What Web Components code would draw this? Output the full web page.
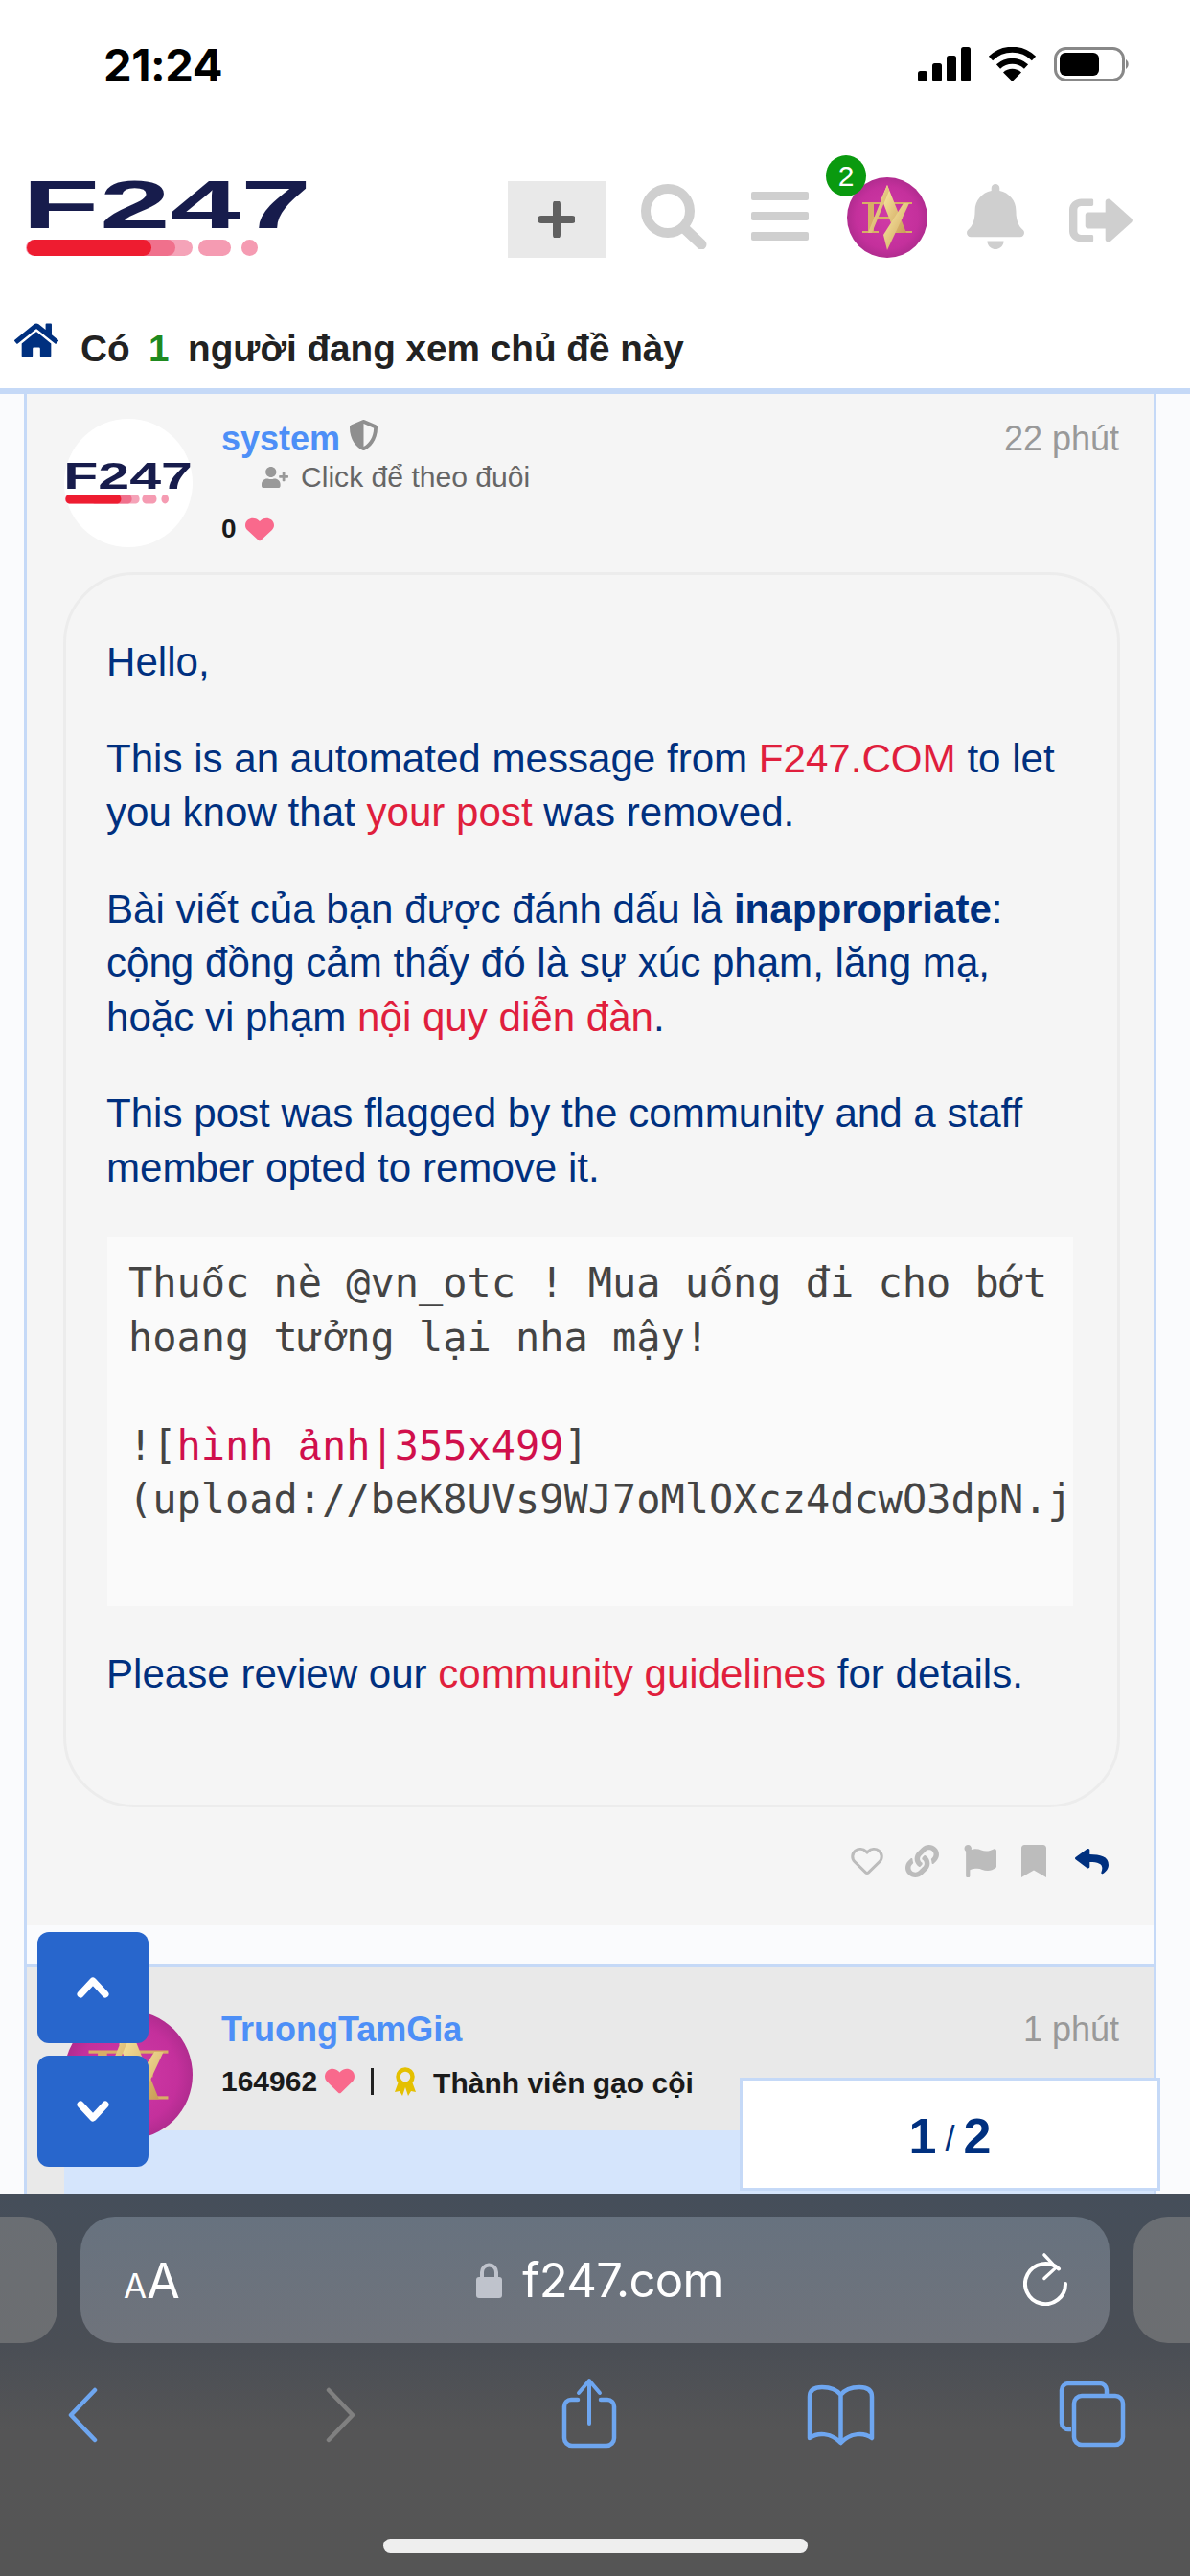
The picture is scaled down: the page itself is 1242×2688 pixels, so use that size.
<!DOCTYPE html>
<html lang="vi"><head><meta charset="utf-8"><title>F247</title>
<style>
html,body{margin:0;padding:0;background:#fafbfd}
body{font-family:"Liberation Sans",Arial,sans-serif;width:1242px;height:2688px;overflow:hidden}
</style></head><body>
<app-page>
  <status-bar slot="top"></status-bar>
  <site-header slot="top"></site-header>
  <topic-bar slot="top"></topic-bar>
  <post-card>
    <post-head name="system" time="22 phút" shield>
      <brand-logo slot="avatar" class="mini"></brand-logo>
      <div slot="sub" style="display:flex;align-items:center;height:39px;margin:0 0 0 42px;color:#666;font-size:30.1px;gap:13px"><fa-icon name="userplus" w="28" h="22" color="#999"></fa-icon>Click để theo đuôi</div>
      <div slot="stats" style="display:flex;align-items:center;height:38px;margin-top:16px;font-weight:700;font-size:28px;color:#1a1a1a;gap:9px">0 <fa-icon name="heart" w="30" h="27" color="#f9698c"></fa-icon></div>
    </post-head>
    <post-box>
      <p>Hello,</p>
      <p>This is an automated message from <red-link>F247.COM</red-link> to let<br>you know that <red-link>your post</red-link> was removed.</p>
      <p>Bài viết của bạn được đánh dấu là <b>inappropriate</b>:<br>cộng đồng cảm thấy đó là sự xúc phạm, lăng mạ,<br>hoặc vi phạm <red-link>nội quy diễn đàn</red-link>.</p>
      <p>This post was flagged by the community and a staff<br>member opted to remove it.</p>
      <code-block>
        <div>Thu<span style="font-family:'Liberation Mono'">ố</span>c nè @vn_otc ! Mua u<span style="font-family:'Liberation Mono'">ố</span>ng đi cho bớt</div>
        <div>hoang tư<span style="font-family:'Liberation Mono'">ở</span>ng lại nha mậy!</div>
        <div></div>
        <div>![<span style="color:#d0104c">hình <span style="font-family:'Liberation Mono'">ả</span>nh|355x499</span>]</div>
        <div>(upload://beK8UVs9WJ7oMlOXcz4dcwO3dpN.j</div>
      </code-block>
      <p>Please review our <red-link>community guidelines</red-link> for details.</p>
    </post-box>
    <post-actions></post-actions>
  </post-card>
  <post-card second>
    <post-head second name="TruongTamGia" time="1 phút">
      <gold-avatar slot="avatar" size="134"></gold-avatar>
      <div slot="stats" style="display:flex;align-items:center;height:40px;margin-top:14px;font-weight:700;font-size:30px;color:#1a1a1a">164962<fa-icon name="heart" w="31" h="29" color="#f9698c" style="margin-left:8px"></fa-icon><span style="width:3px;height:28px;background:#222;margin:0 21px 0 17px"></span><rank-ribbon></rank-ribbon><span style="margin-left:17px;margin-top:5px">Thành viên gạo cội</span></div>
    </post-head>
    <selected-post></selected-post>
  </post-card>
  <scroll-buttons slot="float"></scroll-buttons>
  <page-counter slot="float"></page-counter>
  <safari-bar slot="bottom"></safari-bar>
</app-page>
<script>
const ICONS={
 bell:[448,"M224 512c35.32 0 63.97-28.65 63.97-64H160.03c0 35.35 28.65 64 63.97 64zm215.39-149.71c-19.32-20.76-55.47-51.99-55.47-154.29 0-77.7-54.48-139.9-127.94-155.16V32c0-17.67-14.32-32-31.98-32s-31.98 14.33-31.98 32v20.84C118.56 68.1 64.08 130.3 64.08 208c0 102.3-36.15 133.53-55.47 154.29-6 6.45-8.66 14.16-8.61 21.71.11 16.4 12.98 32 32.1 32h383.8c19.12 0 32-15.6 32.1-32 .05-7.55-2.61-15.27-8.61-21.71z"],
 signout:[512,"M497 273L329 441c-15 15-41 4.5-41-17v-96H152c-13.3 0-24-10.7-24-24v-96c0-13.3 10.7-24 24-24h136V88c0-21.4 25.9-32 41-17l168 168c9.3 9.4 9.3 24.6 0 34zM192 436v-40c0-6.6-5.4-12-12-12H96c-17.7 0-32-14.3-32-32V160c0-17.7 14.3-32 32-32h84c6.6 0 12-5.4 12-12V76c0-6.6-5.4-12-12-12H96c-53 0-96 43-96 96v192c0 53 43 96 96 96h84c6.6 0 12-5.4 12-12z"],
 home:[576,"M280.37 148.26L96 300.11V464a16 16 0 0 0 16 16l112.06-.29a16 16 0 0 0 15.92-16V368a16 16 0 0 1 16-16h64a16 16 0 0 1 16 16v95.64a16 16 0 0 0 16 16.05L464 480a16 16 0 0 0 16-16V300L295.67 148.26a12.19 12.19 0 0 0-15.3 0zM571.6 251.47L488 182.56V44.05a12 12 0 0 0-12-12h-56a12 12 0 0 0-12 12v72.61L318.47 43a48 48 0 0 0-61 0L4.34 251.47a12 12 0 0 0-1.6 16.9l25.5 31A12 12 0 0 0 45.15 301l235.22-193.74a12.19 12.19 0 0 1 15.3 0L530.9 301a12 12 0 0 0 16.9-1.6l25.5-31a12 12 0 0 0-1.7-16.93z"],
 shield:[512,"M466.5 83.7l-192-80a48.15 48.15 0 0 0-36.9 0l-192 80C27.7 91.1 16 108.6 16 128c0 198.5 114.5 335.7 221.5 380.3 11.8 4.9 25.1 4.9 36.9 0C360.1 472.6 496 349.3 496 128c0-19.4-11.7-36.9-29.5-44.3zM256.1 446.3l-.1-381 175.9 73.3c-3.3 151.4-82.1 261.1-175.8 307.7z"],
 userplus:[640,"M624 208h-64v-64c0-8.8-7.2-16-16-16h-32c-8.8 0-16 7.2-16 16v64h-64c-8.8 0-16 7.2-16 16v32c0 8.8 7.2 16 16 16h64v64c0 8.8 7.2 16 16 16h32c8.8 0 16-7.2 16-16v-64h64c8.8 0 16-7.2 16-16v-32c0-8.8-7.2-16-16-16zm-400 48c70.7 0 128-57.3 128-128S294.7 0 224 0 96 57.3 96 128s57.3 128 128 128zm89.6 32h-16.7c-22.2 10.2-46.9 16-72.9 16s-50.6-5.8-72.9-16h-16.7C60.2 288 0 348.2 0 422.4V464c0 26.5 21.5 48 48 48h352c26.5 0 48-21.5 48-48v-41.6c0-74.2-60.2-134.4-134.4-134.4z"],
 heart:[512,"M462.3 62.6C407.5 15.9 326 24.3 275.7 76.2L256 96.5l-19.7-20.3C186.1 24.3 104.5 15.9 49.7 62.6c-62.8 53.6-66.1 149.8-9.9 207.9l193.5 199.8c12.5 12.9 32.8 12.9 45.3 0l193.5-199.8c56.3-58.1 53-154.3-9.8-207.9z"],
 link:[512,"M326.612 185.391c59.747 59.809 58.927 155.698.36 214.59-.11.12-.24.25-.36.37l-67.2 67.2c-59.27 59.27-155.699 59.262-214.96 0-59.27-59.26-59.27-155.7 0-214.96l37.106-37.106c9.84-9.84 26.786-3.3 27.294 10.606.648 17.722 3.826 35.527 9.69 52.721 1.986 5.822.567 12.262-3.783 16.612l-13.087 13.087c-28.026 28.026-28.905 73.66-1.155 101.96 28.024 28.579 74.086 28.749 102.325.51l67.2-67.19c28.191-28.191 28.073-73.757 0-101.83-3.701-3.694-7.429-6.564-10.341-8.569a16.037 16.037 0 0 1-6.947-12.606c-.396-10.567 3.348-21.456 11.698-29.806l21.054-21.055c5.521-5.521 14.182-6.199 20.584-1.731a152.482 152.482 0 0 1 20.522 17.197zM467.547 44.449c-59.261-59.262-155.69-59.27-214.96 0l-67.2 67.2c-.12.12-.25.25-.36.37-58.566 58.892-59.387 154.781.36 214.59a152.454 152.454 0 0 0 20.521 17.196c6.402 4.468 15.064 3.789 20.584-1.731l21.054-21.055c8.35-8.35 12.094-19.239 11.698-29.806a16.037 16.037 0 0 0-6.947-12.606c-2.912-2.005-6.64-4.875-10.341-8.569-28.073-28.073-28.191-73.639 0-101.83l67.2-67.19c28.239-28.239 74.3-28.069 102.325.51 27.75 28.3 26.872 73.934-1.155 101.96l-13.087 13.087c-4.35 4.35-5.769 10.79-3.783 16.612 5.864 17.194 9.042 34.999 9.69 52.721.509 13.906 17.454 20.446 27.294 10.606l37.106-37.106c59.271-59.259 59.271-155.699.001-214.959z"],
 flag:[512,"M349.565 98.783C295.978 98.783 251.721 64 184.348 64c-24.955 0-47.309 4.384-68.045 12.013a55.947 55.947 0 0 0 3.586-23.562C118.117 24.015 94.806 1.206 66.338.048 34.345-1.254 8 24.296 8 56c0 19.026 9.497 35.825 24 45.945V488c0 13.255 10.745 24 24 24h16c13.255 0 24-10.745 24-24v-94.4c28.311-12.064 63.582-22.122 114.435-22.122 53.588 0 97.844 34.783 165.217 34.783 48.169 0 86.667-16.294 122.505-40.858C506.84 359.452 512 349.571 512 339.045v-243.1c0-23.393-24.269-38.87-45.485-29.016-34.338 15.948-76.454 31.854-116.95 31.854z"],
 bookmark:[384,"M0 512V48C0 21.49 21.49 0 48 0h288c26.51 0 48 21.49 48 48v464L192 400 0 512z"],
 reply:[512,"M8.309 189.836L184.313 37.851C199.719 24.546 224 35.347 224 56.015v80.053c160.629 1.839 288 34.032 288 186.258 0 61.441-39.581 122.309-83.333 154.132-13.653 9.931-33.111-2.533-28.077-18.631 45.344-145.012-21.507-183.51-176.59-185.742V360c0 20.7-24.3 31.453-39.687 18.164l-176.004-152c-11.071-9.562-11.086-26.753 0-36.328z"]
};
function def(name,html,extra){
  const t=document.createElement('template');t.innerHTML=html;
  customElements.define(name,class extends HTMLElement{
    constructor(){super();this.attachShadow({mode:'open'}).appendChild(t.content.cloneNode(true));}
    connectedCallback(){extra&&extra.call(this,this.shadowRoot)}
  });
}
customElements.define('fa-icon',class extends HTMLElement{
  constructor(){super();this.attachShadow({mode:'open'})}
  connectedCallback(){
    const n=this.getAttribute('name'),[vw,d]=ICONS[n],w=this.getAttribute('w'),h=this.getAttribute('h'),c=this.getAttribute('color');
    const outline=this.hasAttribute('outline');
    this.shadowRoot.innerHTML=`<style>:host{display:inline-flex;flex:none;width:${w}px;height:${h}px}svg{width:100%;height:100%;display:block}</style>
    <svg viewBox="${outline?'-30 -10 572 532':'0 0 '+vw+' 512'}" preserveAspectRatio="none"><path d="${d}" fill="${outline?'none':c}" ${outline?`stroke="${c}" stroke-width="52"`:''}/></svg>`;
  }
});
def('app-page',`<style>
:host{display:flex;flex-direction:column;width:1242px;height:2688px;background:#fafbfd;position:relative;overflow:hidden}
.thread{flex:1;min-height:0;overflow:hidden;display:flex;flex-direction:column;padding-left:25px}
</style>
<slot name="top"></slot><div class="thread"><slot></slot></div><slot name="float"></slot><slot name="bottom"></slot>`);
def('status-bar',`<style>
:host{display:flex;justify-content:space-between;height:150px;box-sizing:border-box;padding:38px 0 0 108px;background:#fff;font-family:Inter,"Liberation Sans",sans-serif}
.t{font-size:47px;font-weight:700;line-height:60px;color:#000;letter-spacing:-.4px}
svg{display:block;margin:11px 0 0 0}
</style><div class="t">21:24</div>
<svg width="284" height="36" viewBox="0 0 284 36">
<g fill="#000"><rect x="0" y="25" width="10" height="11" rx="2.500"/><rect x="15" y="17" width="10" height="19" rx="2.500"/><rect x="30" y="9" width="10" height="27" rx="2.500"/><rect x="45" y="0" width="10" height="36" rx="2.500"/></g>
<g fill="none" stroke="#000" stroke-width="6"><path d="M76 12a32 32 0 0 1 45 0"/><path d="M84 20.500a21 21 0 0 1 29 0"/></g>
<path d="M98.500 36 L89 26.500a14 14 0 0 1 19 0Z" fill="#000"/>
<rect x="143.500" y="1.500" width="71" height="33" rx="11" fill="none" stroke="#888" stroke-width="3"/><rect x="148" y="6" width="41" height="24" rx="6" fill="#000"/><path d="M217 13a6 6 0 0 1 0 10Z" fill="#888"/>
</svg>`);
def('brand-logo',`<style>
:host{display:block;width:298px;height:80px;flex:none}
:host(.mini){width:133px;height:44px}
svg{display:block;width:100%;height:100%;overflow:visible}
text{font-family:"Liberation Sans",sans-serif;font-weight:700;font-size:71px;fill:#171c4c}
</style><svg viewBox="0 0 298 80" preserveAspectRatio="none"><text x="-4" y="50" textLength="302" lengthAdjust="spacingAndGlyphs">F247</text>
<rect x="0" y="62" width="174" height="17" rx="8.500" fill="#f5a3b8"/>
<rect x="60" y="62" width="96" height="17" rx="8.500" fill="#f0708c"/>
<rect x="1" y="62" width="130" height="17" rx="8.500" fill="#ee1c30"/>
<rect x="180" y="62" width="34" height="17" rx="8.500" fill="#f59bb2"/>
<rect x="225" y="62" width="17" height="17" rx="8.500" fill="#f59bb2"/>
</svg>`);
def('gold-avatar',`<style>
:host{display:block;flex:none;width:84px;height:84px}
svg{display:block;width:100%;height:100%}
</style><svg viewBox="0 0 84 84"><defs><radialGradient id="g" cx=".5" cy=".5" r=".55"><stop offset="0" stop-color="#d03aa6"/><stop offset=".7" stop-color="#c4309c"/><stop offset="1" stop-color="#a92a8a"/></radialGradient><linearGradient id="a" x1="0" y1="0" x2="1" y2="1"><stop offset="0" stop-color="#fdf0a8"/><stop offset="1" stop-color="#c99b55"/></linearGradient></defs>
<circle cx="42" cy="42" r="42" fill="url(#g)"/>
<g fill="#d8ae66"><rect x="16" y="26" width="20" height="2"/><rect x="16" y="56" width="17" height="2"/><rect x="48" y="26" width="20" height="2"/><rect x="50" y="56" width="18" height="2"/><rect x="22" y="27" width="6" height="30"/><rect x="28" y="41" width="30" height="2.500"/></g>
<g fill="url(#a)"><polygon points="42,8 62,58 50,58 36,22"/><polygon points="42,76 38,60 59,27 65,27"/><polygon points="42,8 44,14 26,58 22,58"/></g></svg>`,function(r){const s=this.getAttribute('size');if(s){this.style.width=s+'px';this.style.height=s+'px'}});
def('site-header',`<style>
:host{display:flex;align-items:flex-start;height:130px;box-sizing:border-box;background:#fff;padding:38px 0 0 27px}
.plus{flex:none;width:102px;height:80px;margin:1px 0 0 205px;background:#e9e9e9;display:flex;align-items:center;justify-content:center}
.plus svg{display:block}
.s{flex:none;margin:4px 0 0 37px}
.b{flex:none;width:60px;margin:12px 0 0 46px;display:flex;flex-direction:column;gap:12px}
.b i{display:block;height:9px;border-radius:2px;background:#cfcfcf}
.av{position:relative;flex:none;width:84px;height:84px;margin:-3px 0 0 40px}
.n{position:absolute;left:-22px;top:-23px;width:42px;height:43px;border-radius:50%;background:#0a9a0f;color:#fff;font-size:30px;line-height:43px;text-align:center;font-family:"Liberation Sans",sans-serif}
</style>
<brand-logo></brand-logo>
<div class="plus"><svg width="38" height="38" viewBox="0 0 38 38"><path d="M19 3v32M3 19h32" stroke="#606060" stroke-width="8" stroke-linecap="round"/></svg></div>
<svg class="s" width="69" height="68" viewBox="0 0 69 68"><circle cx="28" cy="28" r="23" fill="none" stroke="#cfcfcf" stroke-width="10"/><path d="M45 46l18 17" stroke="#cfcfcf" stroke-width="11" stroke-linecap="round"/></svg>
<div class="b"><i></i><i></i><i></i></div>
<div class="av"><gold-avatar></gold-avatar><span class="n">2</span></div>
<fa-icon name="bell" w="60" h="68" color="#cfcfcf" style="margin:4px 0 0 41px"></fa-icon>
<fa-icon name="signout" w="67" h="60" color="#cfcfcf" style="margin:12px 0 0 47px"></fa-icon>`);
def('topic-bar',`<style>
:host{display:flex;height:131px;box-sizing:border-box;background:#fff;border-bottom:6px solid #c5d9f7;padding:55px 0 0 15px;font-family:"Liberation Sans",sans-serif;font-weight:700;font-size:38.7px;color:#222}
span{line-height:50px;white-space:pre;margin:4px 0 0 23px}
b{color:#1f8a1f;margin:0 -2px}
</style><fa-icon name="home" w="46" h="40" color="#00307f"></fa-icon><span>Có  <b>1</b>  người đang xem chủ đề này</span>`);
def('post-card',`<style>
:host{display:block;width:1182px;flex:none;box-sizing:border-box;border-left:3px solid #c5d9f7;border-right:3px solid #c5d9f7;background:#fafbfd}
:host([second]){background:#e9e9e9;border-top:4px solid #c5d9f7;flex:1}
.inner{background:#f5f5f5}
:host([second]) .inner{background:transparent}
:host(:not([second])) .foot{height:40px}
</style><div class="inner"><slot></slot></div><div class="foot"></div>`);
def('post-head',`<style>
:host{display:grid;grid-template-columns:134px 1fr auto;column-gap:30px;align-items:start;padding:26px 36px 0 39px;height:160px;position:relative;z-index:1;font-family:"Liberation Sans",sans-serif}
:host([second]){padding-top:45px;height:125px}
.av{width:134px;height:134px;border-radius:50%;background:#fff;display:flex;align-items:center;justify-content:center;position:relative}
:host([second]) .av{background:transparent}
.nm{display:flex;align-items:center;height:40px;font-weight:700;font-size:36px;color:#4d8ff7;gap:9px;margin-top:1px}
:host([second]) .nm{margin-top:0}
.tm{font-size:36px;color:#999;line-height:40px;margin-top:1px}
:host([second]) .tm{margin-top:0}
:host(:not([shield])) fa-icon{display:none}
</style><div class="av"><slot name="avatar"></slot></div>
<div><div class="nm"><span id="n"></span><fa-icon name="shield" w="31" h="32" color="#8f8f8f" style="margin-top:-8px"></fa-icon></div><slot name="sub"></slot><slot name="stats"></slot></div>
<div class="tm" id="t"></div>`,function(r){r.getElementById('n').textContent=this.getAttribute('name');r.getElementById('t').textContent=this.getAttribute('time')});
def('post-box',`<style>
:host{display:block;box-sizing:border-box;width:1103px;margin-left:38px;border:3px solid #ececec;border-radius:74px;padding:63px 38px 107px 42px;font-family:"Liberation Sans",sans-serif;font-size:42.1px;line-height:56.5px;color:#00307f;white-space:nowrap}
::slotted(p){margin:0 0 44px}
::slotted(p:last-child){margin:0}
</style><slot></slot>`);
def('red-link',`<style>:host{display:inline;color:#e01f3d}</style><slot></slot>`);
def('code-block',`<style>
:host{display:block;box-sizing:border-box;height:385px;width:1008px;margin:0 0 43px 1px;padding:20px 4px 0 22px;background:#fafafa;font-family:"DejaVu Sans Mono",monospace;font-size:41.95px;line-height:56.5px;color:#444}
.c{overflow:hidden;white-space:normal}
::slotted(div){height:56.5px;white-space:pre}
</style><div class="c"><slot></slot></div>`);
def('post-actions',`<style>
:host{display:flex;align-items:center;height:123px;box-sizing:border-box;padding:0 0 10px 860px}
</style>
<fa-icon name="heart" outline w="34" h="30" color="#bcbcbc"></fa-icon>
<fa-icon name="link" w="35" h="34" color="#bcbcbc" style="margin-left:23px"></fa-icon>
<fa-icon name="flag" w="34" h="34" color="#bcbcbc" style="margin-left:26px"></fa-icon>
<fa-icon name="bookmark" w="26" h="34" color="#bcbcbc" style="margin-left:26px"></fa-icon>
<fa-icon name="reply" w="35" h="30" color="#00307f" style="margin-left:30px"></fa-icon>`);
def('selected-post',`<style>:host{display:block;height:100px;margin-left:39px;background:#d5e5fc}</style>`);
def('rank-ribbon',`<style>:host{display:block;flex:none;width:24px;height:30px}svg{display:block}</style>
<svg width="24" height="30" viewBox="0 0 24 30"><circle cx="12" cy="10" r="7.500" fill="none" stroke="#e4c000" stroke-width="4.500"/><path d="M5 15L1 26l5-1 3 5 3-9 3 9 3-5 5 1-4-11z" fill="#e4c000"/></svg>`);
def('scroll-buttons',`<style>
:host{position:absolute;left:39px;top:2016px;z-index:5;display:flex;flex-direction:column;gap:13px}
div{width:116px;height:116px;border-radius:12px;background:#2866cc;display:flex;align-items:center;justify-content:center}
svg{display:block}
</style><div><svg width="34" height="22" viewBox="0 0 34 22"><path d="M4 18L17 4l13 14" fill="none" stroke="#fff" stroke-width="7" stroke-linecap="round" stroke-linejoin="round"/></svg></div>
<div><svg width="34" height="22" viewBox="0 0 34 22"><path d="M4 4l13 14L30 4" fill="none" stroke="#fff" stroke-width="7" stroke-linecap="round" stroke-linejoin="round"/></svg></div>`);
def('page-counter',`<style>
:host{position:absolute;left:772px;top:2168px;z-index:5;width:439px;height:118px;box-sizing:border-box;background:#fff;border:3px solid #c5d9f7;padding-top:4px;display:flex;align-items:center;justify-content:center;font-family:"Liberation Sans",sans-serif;font-weight:700;font-size:52px;color:#00307f;gap:9px}
i{font-style:normal;font-weight:400;font-size:36px;margin-top:6px}
</style><span>1</span><i>/</i><span>2</span>`);
def('safari-bar',`<style>
:host{display:block;position:absolute;left:0;top:2289px;z-index:6;width:1242px;height:399px;background:linear-gradient(#454e5a 0,#4a4e55 40%,#555556 62%,#555);font-family:Inter,"Liberation Sans",sans-serif;color:#fff}
.row{display:flex;align-items:flex-start;height:156px;padding-top:24px;box-sizing:border-box;overflow:hidden}
.tab{flex:none;height:132px;background:linear-gradient(#6a6e73,#6c6e71);width:60px;border-radius:0 36px 36px 0}
.tab.r{border-radius:36px 0 0 36px;width:59px}
.addr{flex:none;width:1074px;height:132px;margin:0 25px 0 24px;border-radius:36px;background:linear-gradient(#67727f,#6f737b);position:relative;display:flex;align-items:center;justify-content:center}
.aa{position:absolute;left:45px;top:39px;line-height:56px;font-size:50px;font-weight:400}
.aa small{font-size:35px}
.url{display:flex;align-items:center;gap:21px;font-size:49px;margin-left:10px;letter-spacing:-.7px}
.rl{position:absolute;left:984px;top:37px;display:block}
.tools{display:flex;align-items:flex-start;height:150px;box-sizing:border-box}
.tools svg{display:block;flex:none;overflow:visible}
.home{width:443px;height:15px;border-radius:8px;background:#eee;margin:54px 0 0 400px}
</style>
<div class="row"><div class="tab"></div><div class="addr"><div class="aa"><small>A</small>A</div>
<div class="url"><svg width="27" height="38" viewBox="0 0 27 38"><path d="M6 18v-7a7.500 7.500 0 0 1 15 0v7" fill="none" stroke="#bfc3cc" stroke-width="4"/><rect x="0" y="16" width="27" height="22" rx="3" fill="#bfc3cc"/></svg><span>f247.com</span></div>
<svg class="rl" width="46" height="56" viewBox="0 0 46 56"><path d="M37 15.500A21 21 0 1 0 44 31" fill="none" stroke="#fff" stroke-width="4" stroke-linecap="round" transform="translate(0 2)"/><path d="M21 3l13 14-13 12" fill="none" stroke="#fff" stroke-width="3.500" stroke-linecap="round" stroke-linejoin="round" transform="scale(.95) translate(2 0)"/></svg>
</div><div class="tab r"></div></div>
<div class="tools">
<svg width="30" height="56" viewBox="0 0 30 56" style="margin:47px 0 0 71px"><path d="M28 2L3 28l25 26" fill="none" stroke="#6ea6f0" stroke-width="4.500" stroke-linecap="round" stroke-linejoin="round"/></svg>
<svg width="30" height="56" viewBox="0 0 30 56" style="margin:47px 0 0 240px"><path d="M2 2l25 26L2 54" fill="none" stroke="#808080" stroke-width="4.500" stroke-linecap="round" stroke-linejoin="round"/></svg>
<svg width="56" height="72" viewBox="0 0 56 72" style="margin:37px 0 0 216px"><path d="M16 22H9a7 7 0 0 0-7 7v33a8 8 0 0 0 8 8h36a8 8 0 0 0 8-8V29a7 7 0 0 0-7-7h-7" fill="none" stroke="#6ea6f0" stroke-width="4.500" stroke-linecap="round"/><path d="M28 47V3M17 15L28 2l11 13" fill="none" stroke="#6ea6f0" stroke-width="4" stroke-linecap="round" stroke-linejoin="round"/></svg>
<svg width="71" height="62" viewBox="0 0 71 62" style="margin:44px 0 0 199px"><path d="M35.500 10C31 4 24 2 16 2 8 2 3 5 3 12v43c8-6 22-6 32.500 5C46 49 60 49 68 55V12c0-7-5-10-13-10-8 0-15 2-19.500 8zM35.500 10V58" fill="none" stroke="#6ea6f0" stroke-width="4.500" stroke-linejoin="round"/></svg>
<svg width="68" height="68" viewBox="0 0 68 68" style="margin:40px 0 0 193px"><path d="M12 50H9a7 7 0 0 1-7-7V9a7 7 0 0 1 7-7h33a7 7 0 0 1 7 7v5" fill="none" stroke="#6ea6f0" stroke-width="4.500"/><rect x="15" y="15" width="51" height="51" rx="8" fill="none" stroke="#6ea6f0" stroke-width="4.500"/></svg>
</div>
<div class="home"></div>`);
</script>
</body></html>
